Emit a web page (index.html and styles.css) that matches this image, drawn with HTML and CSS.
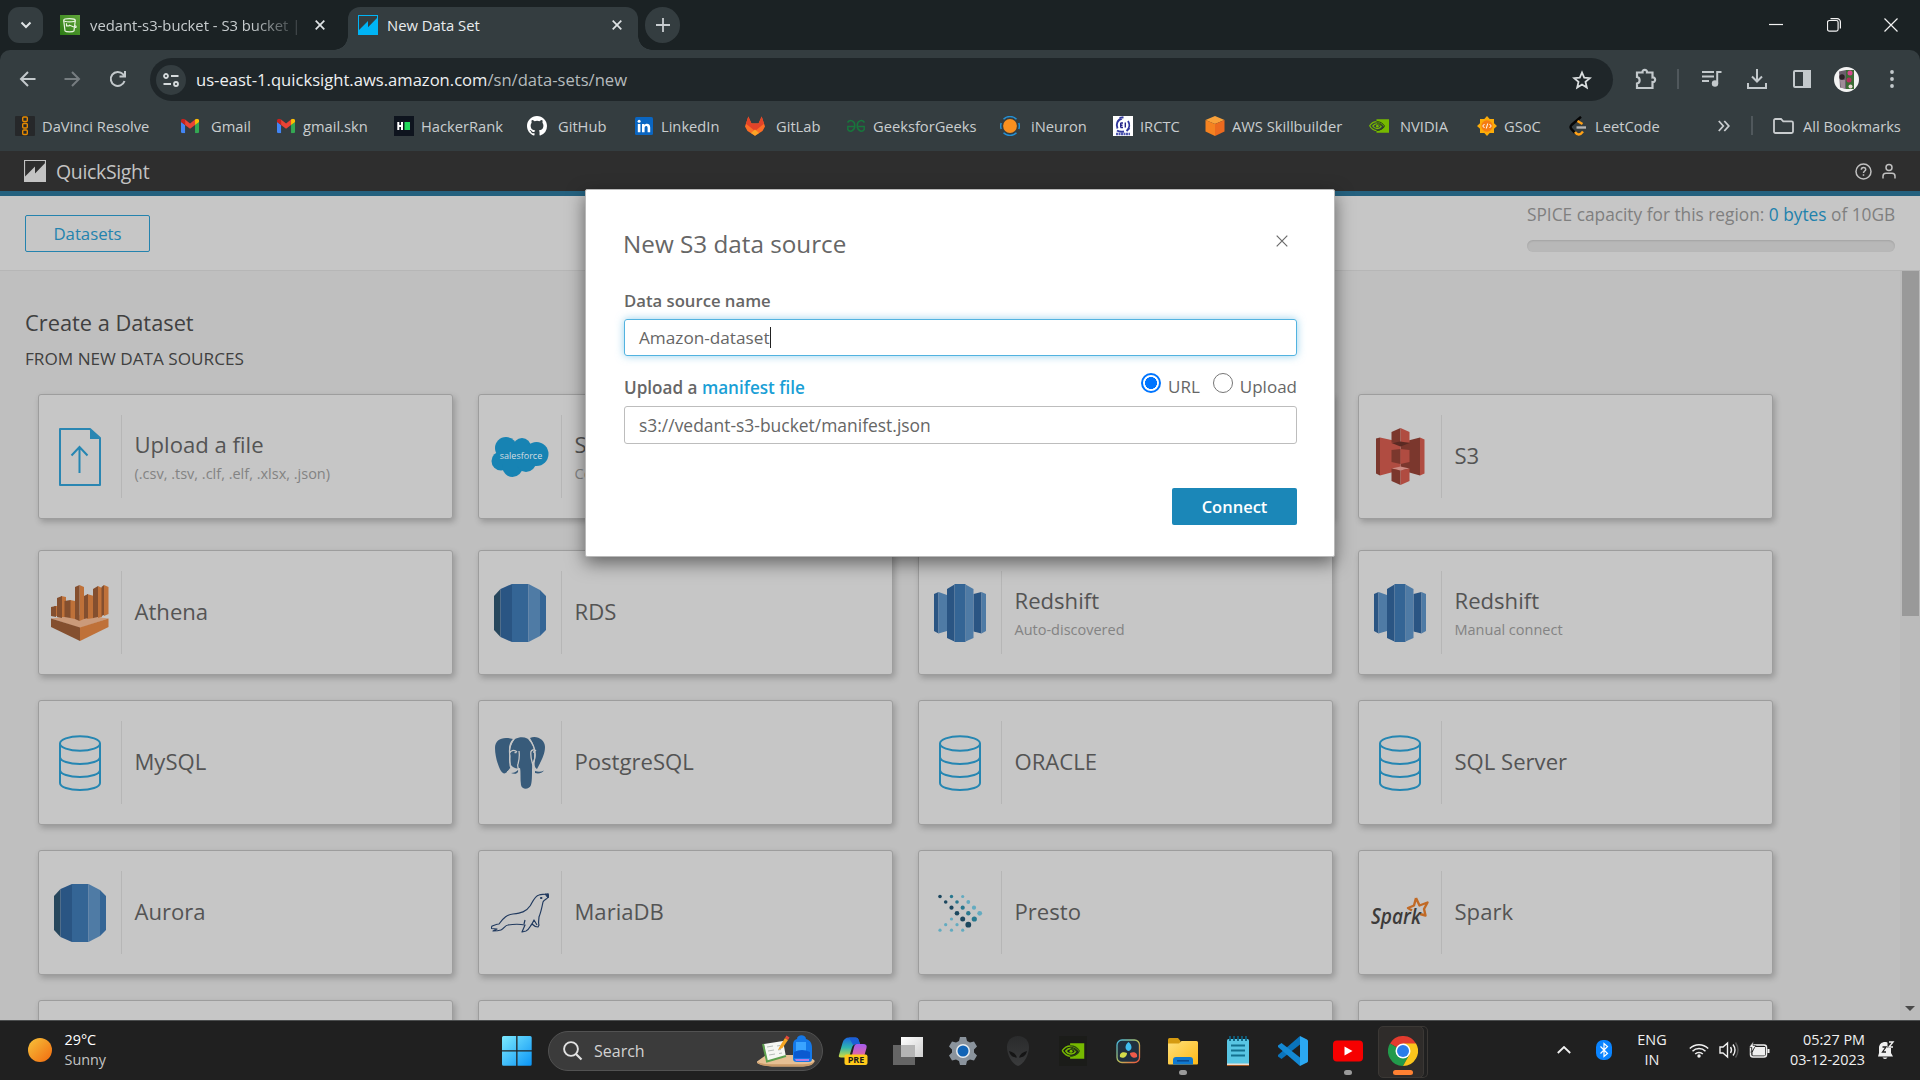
FILE: index.html
```html
<!DOCTYPE html>
<html lang="en">
<head>
<meta charset="utf-8">
<title>New Data Set</title>
<link rel="stylesheet" href="styles.css">
</head>
<body>
<svg class="defs" width="0" height="0">
  <defs>
    <symbol id="quicksight" viewBox="0 0 20 20"><path fill="currentColor" fill-rule="evenodd" d="M0 0h20v20H0zM1 1v14l9-9v6.300l9-9.300V1z"/></symbol>
    <symbol id="gmail" viewBox="0 0 20 16"><path fill="#4285f4" d="M0 3.500 4.500 7v9H1.500A1.500 1.500 0 0 1 0 14.500z"/><path fill="#34a853" d="M20 3.500 15.500 7v9h3a1.500 1.500 0 0 0 1.500-1.500z"/><path fill="#ea4335" d="M4.500 1 10 5.200 15.500 1v6L10 11.200 4.500 7z"/><path fill="#c5221f" d="M0 2.200C0 .3 2-.7 3.600.4l.9.6v6L0 3.600z"/><path fill="#fbbc04" d="M20 2.200c0-1.900-2-2.900-3.600-1.800l-.9.600v6L20 3.600z"/></symbol>
    <symbol id="nvidia" viewBox="0 0 24 16"><path fill="#76b900" d="M9 0h15v16H9v-2.200c4.300.2 7.500-2 9.500-4.300-2.500-3.800-5.500-5.900-9.500-6z"/><path fill="none" stroke="#76b900" stroke-width="1.500" d="M9.500 2.700C5.500 2.700 2.500 5 .8 7.700 2.600 11 5.500 13.300 9.500 13.600M10 5.200C7.500 5.300 5.700 6.500 4.500 8c1.300 2 3 3.100 5.500 3.200 2-.1 3.700-1.200 4.700-2.700C13.500 6.500 12 5.300 10 5.200"/><path fill="none" stroke="#2c4a10" stroke-width="1.200" d="M9 2.700c4.500-.2 7.500 2 9.700 5.300-2.200 3.200-5.200 5.300-9.700 5.500M9.500 5.300c2.800 0 4.800 1.200 6 3"/><circle cx="10" cy="8.200" r="1.600" fill="#76b900"/></symbol>
    <symbol id="database" viewBox="0 0 42 56"><g fill="none" stroke="#2586b2" stroke-width="2"><ellipse cx="21" cy="8.500" rx="20" ry="7.300"/><path d="M1 8.500v39.500c0 4 9 7 20 7s20-3 20-7V8.500M1 22c0 4 9 7 20 7s20-3 20-7M1 35c0 4 9 7 20 7s20-3 20-7"/></g></symbol>
    <symbol id="rds" viewBox="0 0 52 58"><path fill="#26465c" d="M0 12 6.500 5v48L0 46z"/><path fill="#2a5583" d="M6.500 5 18 0v58L6.500 53z"/><path fill="#346595" d="M18 0h16.500v58H18zM46 6l6 6v34l-6 6z"/><path fill="#4f7ba5" d="M34.500 0 46 6v46l-11.500 6z"/></symbol>
    <symbol id="redshift" viewBox="0 0 52 58"><path fill="#2a5583" d="M0 10l4.500-2v41.500L0 47zM13 5l7.500-4.500v57L13 54zM39.500 10l8-2v41.500l-8-2z"/><path fill="#4f7ba5" d="M4.500 8l8.500 3v36l-8.500 2.500zM31.500.5l8 4.500v49l-8 3.500zM47.500 8l4.500 2v37l-4.500 2.500z"/><path fill="#346595" d="M20.500 0h11v58h-11z"/></symbol>
    <linearGradient id="sunfill" x1="0" y1="0" x2="1" y2="1"><stop offset="0" stop-color="#f6c33b"/><stop offset="1" stop-color="#f26a0f"/></linearGradient>
    <linearGradient id="winfill" x1="0" y1="0" x2="1" y2="1"><stop offset="0" stop-color="#7deaff"/><stop offset="1" stop-color="#0a94f5"/></linearGradient>
    <linearGradient id="copA" x1="0" y1="0" x2="0" y2="1"><stop offset="0" stop-color="#1c66e0"/><stop offset=".5" stop-color="#2eb5b0"/><stop offset="1" stop-color="#d6dc3a"/></linearGradient>
    <linearGradient id="copB" x1="0" y1="0" x2="0" y2="1"><stop offset="0" stop-color="#a45cf0"/><stop offset="1" stop-color="#f5668b"/></linearGradient>
    <linearGradient id="folderfill" x1="0" y1="0" x2="1" y2="1"><stop offset="0" stop-color="#ffe07a"/><stop offset="1" stop-color="#fdb917"/></linearGradient>
    <linearGradient id="resolve" x1="0" y1="0" x2="1" y2="1"><stop offset="0" stop-color="#3fb7e8"/><stop offset=".5" stop-color="#b9c05a"/><stop offset="1" stop-color="#f0503c"/></linearGradient>
    <linearGradient id="white" x1="0" y1="0" x2="1" y2="1"><stop offset="0" stop-color="#fff"/><stop offset="1" stop-color="#cfcfcf"/></linearGradient>
    <linearGradient id="bucket" x1="0" y1="1" x2="1" y2="0"><stop offset="0" stop-color="#2b7a14"/><stop offset="1" stop-color="#62a73b"/></linearGradient>
    <linearGradient id="alien" x1="0" y1="0" x2="0" y2="1"><stop offset="0" stop-color="#2a2b2c"/><stop offset="1" stop-color="#3a3b3c"/></linearGradient>
  </defs>
</svg>

<div class="tabstrip">
  <div class="tab-search"><svg width="12" height="8" viewBox="0 0 12 8"><path d="M1.500 1.500 6 6l4.500-4.500" fill="none" stroke="#dfe3e5" stroke-width="2"/></svg></div>
  <div class="tab">
    <svg class="favicon" viewBox="0 0 20 20"><path fill="url(#bucket)" d="M0 0h20v20H0z"/><g fill="none" stroke="#e9f5e3" stroke-width="1.200"><ellipse cx="9.500" cy="5.300" rx="5.800" ry="1.600"/><path d="m3.700 5.500 1.300 10.300c1 1.300 8 1.300 9 0L15.300 5.500M6.500 8.300v2.500h3M9 10l6 2.500q2 0 .5-2"/></g></svg>
    <span class="tab-title fade">vedant-s3-bucket - S3 bucket |</span>
    <svg class="x" viewBox="0 0 10 10"><path d="m.7.7 8.600 8.600M9.300.7.7 9.300"/></svg>
  </div>
  <div class="tab active">
    <svg class="favicon qs" viewBox="0 0 20 20"><use href="#quicksight"/></svg>
    <span class="tab-title">New Data Set</span>
    <svg class="x" viewBox="0 0 10 10"><path d="m.7.7 8.600 8.600M9.300.7.7 9.300"/></svg>
  </div>
  <div class="new-tab"><svg width="14" height="14" viewBox="0 0 14 14"><path d="M7 0v14M0 7h14" stroke="#c8cdd0" stroke-width="1.800"/></svg></div>
  <div class="window-buttons">
    <span><svg width="14" height="14" viewBox="0 0 14 14"><path d="M0 6.500h14"/></svg></span>
    <span><svg width="14" height="14" viewBox="0 0 14 14"><path d="M3.500.6h6.500a3.300 3.300 0 0 1 3.400 3.400v6.500M2.500 2.500h6.800a1.800 1.800 0 0 1 1.800 1.800v7a1.800 1.800 0 0 1-1.800 1.800H2.300a1.800 1.800 0 0 1-1.800-1.800v-7a1.800 1.800 0 0 1 2-1.800z"/></svg></span>
    <span><svg width="14" height="14" viewBox="0 0 14 14"><path d="m.5.5 13 13M13.500.5l-13 13"/></svg></span>
  </div>
</div>

<div class="toolbar-wrap"><div class="toolbar">
  <span class="tool"><svg width="17" height="16" viewBox="0 0 17 16"><path d="M9 1 2 8l7 7M2 8h14.500"/></svg></span>
  <span class="tool dim"><svg width="17" height="16" viewBox="0 0 17 16"><path d="m8 1 7 7-7 7m7-7H.5"/></svg></span>
  <span class="tool"><svg width="18" height="18" viewBox="0 0 18 18"><path d="M15.500 11A7 7 0 1 1 14 4.200L16 6M16 1v5.500h-5.500"/></svg></span>
  <div class="omnibox">
    <span class="site-info"><svg width="16" height="14" viewBox="0 0 16 14"><path d="M8 3h7.500M.5 11H8"/><circle cx="3" cy="3" r="2"/><circle cx="13" cy="11" r="2"/></svg></span>
    <span class="url"><b>us-east-1.quicksight.aws.amazon.com</b>/sn/data-sets/new</span>
    <svg class="star" width="20" height="20" viewBox="0 0 20 20"><path d="m10 2.500 2.200 5.200 5.600.5-4.300 3.700 1.300 5.600L10 14.500l-4.800 3 1.300-5.600-4.300-3.700 5.600-.5z" fill="none" stroke="#dadedf" stroke-width="1.800"/></svg>
  </div>
  <span class="tool ext"><svg width="22" height="22" viewBox="0 0 22 22"><path d="M2 4.500h5.500C7 1 12.500 1 12 4.500h5.500v5c3.500-.5 3.500 5 0 4.500v6H2v-4.500c3.500-.5 3.500-6 0-6.500z" stroke-width="2.200"/></svg></span>
  <i class="rule"></i>
  <span class="tool music"><svg width="20" height="20" viewBox="0 0 20 20"><path d="M0 3h12M0 7.500h12M0 12h7M15.200 14.500V3h4.300"/><circle cx="13" cy="14.500" r="3.200" fill="#c3c9cc" stroke="none"/></svg></span>
  <span class="tool"><svg width="20" height="20" viewBox="0 0 20 20"><path d="M10 0v12.500m-5-5 5 5 5-5M1 14v5h18v-5"/></svg></span>
  <span class="tool"><svg width="18" height="18" viewBox="0 0 18 18"><rect x="1" y="1" width="16" height="16" rx="1"/><path d="M11 1h6v16h-6z" fill="#c3c9cc"/></svg></span>
  <span class="tool"><svg width="25" height="25" viewBox="0 0 25 25"><circle cx="12.500" cy="12.500" r="12.500" fill="#f3f3f3" stroke="none"/><path d="M5 4.500 12 3v19l-6-1.500z" fill="#6b5f6c" stroke="none"/><path d="M12 3h8v19h-8z" fill="#3c6b35" stroke="none"/><circle cx="16" cy="6" r="2.500" fill="#d6478c" stroke="none"/><circle cx="15" cy="13" r="2.500" fill="#b2305e" stroke="none"/><circle cx="16.500" cy="19.500" r="2" fill="#e9d7d3" stroke="none"/><circle cx="8" cy="10" r="2.700" fill="#2b2126" stroke="none"/><path d="M6 13h5v8H7z" fill="#a08b98" stroke="none"/></svg></span>
  <span class="tool"><svg width="4" height="20" viewBox="0 0 4 20"><g fill="#c3c9cc" stroke="none"><circle cx="2" cy="3" r="1.900"/><circle cx="2" cy="10" r="1.900"/><circle cx="2" cy="17" r="1.900"/></g></svg></span>
</div></div>

<div class="bookmarks">
  <div class="bm"><svg viewBox="0 0 20 20"><rect width="20" height="20" rx="1" fill="#26282a"/><g fill="none" stroke="#e58a00" stroke-width="1.400"><rect x="7.700" y="1" width="4.600" height="4.500" rx="1"/><rect x="7.700" y="7.500" width="4.600" height="4.500" rx="1"/><rect x="7.700" y="14" width="4.600" height="4.500" rx="1"/></g></svg>DaVinci Resolve</div>
  <div class="bm wide"><svg viewBox="0 0 20 20"><use href="#gmail" x=".800" y="2.700" width="18.500" height="14.500"/></svg>Gmail</div>
  <div class="bm"><svg viewBox="0 0 20 20"><use href="#gmail" x=".800" y="2.700" width="18.500" height="14.500"/></svg>gmail.skn</div>
  <div class="bm"><svg viewBox="0 0 20 20"><path fill="#0e141e" d="M0 0h20v20H0z"/><path fill="none" stroke="#fff" stroke-width="2" d="M4.300 6v8M8 6v8M4 10h4"/><path fill="#21d95b" d="M10.500 6H16v8h-5.500z"/></svg>HackerRank</div>
  <div class="bm wide near"><svg viewBox="0 0 16 16"><path fill="#fff" d="M8 0C3.580 0 0 3.580 0 8c0 3.540 2.290 6.530 5.470 7.590.4.070.55-.17.55-.38v-1.490c-2.010.37-2.530-.49-2.690-.94-.09-.23-.48-.94-.82-1.130-.28-.15-.68-.52-.01-.53.63-.01 1.080.58 1.230.82.720 1.210 1.870.87 2.330.66.070-.52.280-.87.510-1.070-1.780-.2-3.640-.89-3.640-3.950 0-.87.310-1.590.82-2.150-.08-.2-.36-1.020.08-2.120 0 0 .67-.21 2.200.82a7.500 7.500 0 0 1 4 0c1.530-1.040 2.200-.82 2.200-.82.440 1.100.16 1.920.08 2.120.51.560.82 1.270.82 2.150 0 3.070-1.870 3.750-3.650 3.950.29.250.54.730.54 1.480v2.200c0 .21.150.46.550.38A8 8 0 0 0 16 8c0-4.420-3.580-8-8-8z"/></svg>GitHub</div>
  <div class="bm"><svg viewBox="0 0 20 20"><rect x="1" y="1" width="18" height="18" rx="1.500" fill="#0a66c2"/><g fill="#fff"><path d="M3.800 8h2.600v8.300H3.800zM8 8h2.500v1.200c1.400-2.200 5.700-1.900 5.700 2.300v4.800h-2.600v-4.300c0-2.700-3-2.500-3 0v4.300H8z"/><circle cx="5.100" cy="5.300" r="1.500"/></g></svg>LinkedIn</div>
  <div class="bm wide"><svg viewBox="0 0 20 20"><path fill="#fc6d26" d="M0 10.500 3.300.5 6.500 7.500h7L16.700.5l3.300 10-2.500 4.500L10 19.700 2.500 15z"/><path fill="#e24329" d="M3.300.5 6.500 7.500h7L16.700.5 19 7.800 10 15 1 7.800z"/><path fill="#fca326" d="M10 19.700 6 17l4-3.500L14 17z"/></svg>GitLab</div>
  <div class="bm"><svg viewBox="0 0 20 20"><g fill="none" stroke="#18753c" stroke-width="1.500"><path d="M1.500 6.500c2.500-3.500 7.300-2 7.300 3.200s-5 7-7 3.800V10.500h7M18.500 6.500c-2.500-3.500-7.300-2-7.300 3.200s5 7 7 3.800V10.500h-7"/></g></svg>GeeksforGeeks</div>
  <div class="bm wide"><svg viewBox="0 0 20 20"><circle cx="10" cy="10" r="6.900" fill="#f8901f"/><path d="M3.500 3.200a9.300 9.300 0 0 1 13 0M3.500 16.800a9.300 9.300 0 0 0 13 0M1.200 7a9 9 0 0 0 0 6M18.800 7a9 9 0 0 1 0 6" fill="none" stroke="#2590d3" stroke-width="1.500"/></svg>iNeuron</div>
  <div class="bm"><svg viewBox="0 0 20 20"><path fill="#fff" d="M0 0h20v20H0z"/><path d="M4.500 12.500c-2-4 0-9 4.500-10M6.500 2l4-.7M15 5c2 3 1.500 7-1 9.500M16.500 12l-3 3M4 14.500c2 1.500 4 1.500 7 1" fill="none" stroke="#30379c" stroke-width="1.900"/><path d="M7.500 7h2.500M7.500 9.200h2m-2 2.300h2.500M7.700 7v4.500M12.300 6.500v5" fill="none" stroke="#25258a" stroke-width="1.400"/><path d="M3 18h14" stroke="#5058b0" stroke-width="2.600" stroke-dasharray="2 .5"/></svg>IRCTC</div>
  <div class="bm"><svg viewBox="0 0 20 20"><path fill="#f9a13a" d="m10 0 9.500 4L10 8 .5 4z"/><path fill="#f58220" d="M.5 4 10 8v12L.5 15.500z"/><path fill="#ec6a1f" d="M19.500 4 10 8v12l9.500-4.500z"/></svg>AWS Skillbuilder</div>
  <div class="bm wide"><svg viewBox="0 0 20 20"><use href="#nvidia" y="3" width="20" height="14"/></svg>NVIDIA</div>
  <div class="bm"><svg viewBox="0 0 20 20"><path fill="#fbab09" d="m10 0 2.700 3h4.300v4.300L20 10l-3 2.700V17h-4.300L10 20l-2.700-3H3v-4.300L0 10l3-2.700V3h4.300z"/><circle cx="10" cy="10" r="5.700" fill="#f57c13"/><path d="M7.500 8 5.700 10l1.800 2M12.500 8l1.800 2-1.800 2M10.700 7.500l-1.400 5" fill="none" stroke="#fff" stroke-width="1"/></svg>GSoC</div>
  <div class="bm"><svg viewBox="0 0 20 20"><g fill="none" stroke-width="2.400"><path stroke="#060606" d="M13 .8 3.500 9c-1.500 1.500-1 3 0 4.200l3.500 3.600"/><path stroke="#ffa116" d="m9.500 5 5 3M7 16c2.500 3.500 5 3.500 8-.5"/><path stroke="#b3b3b3" d="M8.500 11.500H18"/></g></svg>LeetCode</div>
  <div class="bm-end">
    <svg width="12" height="12" viewBox="0 0 12 12"><path d="m.8 1 4.500 5-4.500 5M6.300 1l4.500 5-4.500 5"/></svg>
    <i class="rule"></i>
    <svg class="fold" width="21" height="16" viewBox="0 0 21 16"><path d="M1 13.500v-11Q1 1 2.500 1H8l2.200 2.300h8.300Q20 3.300 20 4.800v8.700q0 1.500-1.500 1.500h-16Q1 15 1 13.500z"/></svg>
    <span>All Bookmarks</span>
  </div>
</div>

<header class="app-header">
  <svg width="22" height="22" viewBox="0 0 20 20"><use href="#quicksight"/></svg>
  <span class="brand">QuickSight</span>
  <span class="header-icons">
    <svg width="17" height="17" viewBox="0 0 17 17"><circle cx="8.500" cy="8.500" r="7.500"/><path d="M6.300 6.700c0-3 4.400-3 4.400-.3 0 1.700-2.200 1.600-2.200 3.600m0 1.200v1.600"/></svg>
    <svg width="14" height="17" viewBox="0 0 14 17"><circle cx="7" cy="4.500" r="3"/><path d="M1 15.500v-2.200q0-3 3-3h6q3 0 3 3v2.200"/></svg>
  </span>
</header>
<div class="subheader">
  <button class="datasets">Datasets</button>
  <div class="spice"><div>SPICE capacity for this region: <span class="lnk">0 bytes</span> of 10GB</div><div class="meter"></div></div>
</div>

<main class="content">
  <div class="scrollarea">
    <h1>Create a Dataset</h1>
    <h2>FROM NEW DATA SOURCES</h2>
    <div class="cards">
      <div class="card"><div class="ico"><svg width="42" height="58" viewBox="0 0 42 58"><path d="M1 1h30l10 9v47H1z" fill="none" stroke="#2a86b2" stroke-width="2" stroke-linejoin="round"/><path d="M31 1v10h10z" fill="#2a86b2"/><path d="M20.500 45V19.500m-8 8 8-8.500 8 8.500" fill="none" stroke="#2586b2" stroke-width="2"/></svg></div><div class="txt"><b>Upload a file</b><small>(.csv, .tsv, .clf, .elf, .xlsx, .json)</small></div></div>
      <div class="card"><div class="ico"><svg width="58" height="42" viewBox="0 0 58 42"><g fill="#1783b3"><circle cx="15" cy="12" r="11"/><circle cx="31" cy="11" r="9"/><circle cx="45.500" cy="18" r="12"/><circle cx="10" cy="25" r="9.500"/><circle cx="21.500" cy="31" r="10"/><circle cx="35" cy="26" r="10"/><path d="M12 10h34v20H12z"/></g><text x="30" y="22.500" text-anchor="middle" class="sf">salesforce</text></svg></div><div class="txt"><b>Salesforce</b><small>Connect to Salesforce</small></div></div>
      <div class="card"><div class="ico"></div></div>
      <div class="card"><div class="ico"><svg width="49" height="57" viewBox="0 0 49 57"><path fill="#7b372d" d="M0 10.500 4 9.500v38l-4-2zM44 9.500v38L24.500 42V14.500z"/><path fill="#b04c41" d="M4 9.500 24.500 14v28L4 47.500zM44 9.500l4.500 2v34l-4.500 2z"/><path fill="#7b372d" d="M15.500 4 24.500 0v15l-9-.5zM15.500 22l9-1v15l-9-2z"/><path fill="#b04c41" d="m24.500 0 9 4v10.500l-9 .5zM24.500 21l9 1v12l-9 2z"/><path fill="#5b2a23" d="m15.500 15 9-1.500 9 1.500-9 3.500z"/><path fill="#cb8a82" d="m15.500 40.500 9-2 9 2-9 2z"/><path fill="#7b372d" d="m15.500 40.500 9 2V57l-9-4z"/><path fill="#b04c41" d="m33.500 40.500-9 2V57l9-4z"/></svg></div><div class="txt"><b>S3</b></div></div>

      <div class="card"><div class="ico"><svg width="58" height="56" viewBox="0 0 58 56"><path fill="#cb9a7a" d="m0 33.500 29-3.500 28.500 3.500L29 43z"/><path fill="#844f2f" d="m0 33.500 29 9V56L0 42z"/><path fill="#bf7139" d="m57.500 33.500-28.500 9V56l28.500-14z"/><path fill="#bf7139" d="M3 21h4v10H3zM10 11l5 1v20h-5zM19 15l5 1v18l-5-1zM28.500 0l4.500 2v32l-4.500 2zM36 9l7 2v22l-7 1zM47 1l4 2v29l-4 1zM53 0l4.500 2v27L53 31z"/><path fill="#844f2f" d="M0 22l5-1v11l-5-1zM6 13l5-2v22l-5-1zM13.500 16l6-1v18l-6-1zM24 2l4.500-2v36L24 34zM33 11l4-2v24l-4 1zM42 4l5-3v31l-5 1zM50.500 2 53 0v30l-2.500 1z"/></svg></div><div class="txt"><b>Athena</b></div></div>
      <div class="card"><div class="ico"><svg width="52" height="58"><use href="#rds"/></svg></div><div class="txt"><b>RDS</b></div></div>
      <div class="card"><div class="ico"><svg width="52" height="58"><use href="#redshift"/></svg></div><div class="txt"><b>Redshift</b><small>Auto-discovered</small></div></div>
      <div class="card"><div class="ico"><svg width="52" height="58"><use href="#redshift"/></svg></div><div class="txt"><b>Redshift</b><small>Manual connect</small></div></div>

      <div class="card"><div class="ico"><svg width="42" height="56"><use href="#database"/></svg></div><div class="txt"><b>MySQL</b></div></div>
      <div class="card"><div class="ico"><svg width="50" height="52" viewBox="0 0 50 52"><g fill="#385b7a"><path d="M18 2C8-1 0 2 0 11c0 8 3 18 6 23 2 3 4 3 6 1l4-4-2-8V13c0-5 1-8 4-11z"/><path d="M20 2c6-3 13-2 16 3 4 6 3 12 3 17 0 3-2 6-2 11 0 7 0 11-1 15-2 5-9 5-10 0-1-6 0-13-1-17-3 1-7 0-9-3-2-8-2-20 4-26z"/><path d="M35 1c7-3 15 2 15 9 0 8-5 16-8 22-2-1-3-4-2-8 1-8 0-15-5-23zM16 36c3 0 5-1 7-3 1 3-3 5-7 3zM40 34c3 1 6 1 9-.5-2 3-6 3.500-9 2.500z"/></g><g fill="none" stroke="#c6c6c6" stroke-width="1.300"><path d="M19 2c-5 6-5 12-4 17 0 5-1 8 1 12M22 15c-3-3-7-1-7 1M24 14c1 6 0 9-1 13-1 2 0 4 1 6M16 31c-2 2-2 4-4 4M34 2c5 6 7 11 6 18-.5 4-3 6-2 10l3 3M36 15c0-2 3-3 5-1M36 14c-1 6 1 10 2 15"/></g><path d="M19.500 15.500h2M38 15h1.500" stroke="#c6c6c6" stroke-width="1.500"/></svg></div><div class="txt"><b>PostgreSQL</b></div></div>
      <div class="card"><div class="ico"><svg width="42" height="56"><use href="#database"/></svg></div><div class="txt"><b>ORACLE</b></div></div>
      <div class="card"><div class="ico"><svg width="42" height="56"><use href="#database"/></svg></div><div class="txt"><b>SQL Server</b></div></div>

      <div class="card"><div class="ico"><svg width="52" height="58"><use href="#rds"/></svg></div><div class="txt"><b>Aurora</b></div></div>
      <div class="card"><div class="ico"><svg width="58" height="40" viewBox="0 0 58 40"><g fill="none" stroke="#213a5f" stroke-width="1.200" stroke-linejoin="round"><path d="M1 33c3-1 5-2 7-2 5-7 8-9 14-10 8-1 13-2 17-8 3-5 5-10 9-11 3-1 5 0 9-1.300L57.500 4C56 6 53 7 52 9c-1 5-2 10-4 15 0 2-1 6 0 8l-1 2c-3 0-4-1-6-3-2 2-3 6-6 7l-4 1 3-7c-5-1-11-1-17 0-3 0-4 4-7 5-3 1-5 1-8 1l4-2-6-.5z"/><path d="m33 31 1-4M41 31l2-4 3 5" /></g><path d="m54 1 4 1-1 3zM49 5l2-.5v1z" fill="#213a5f" stroke="#213a5f"/></svg></div><div class="txt"><b>MariaDB</b></div></div>
      <div class="card"><div class="ico"><svg width="46" height="38" viewBox="0 0 46 38"><g fill="#1c475e"><circle cx="3" cy="2.500" r="1.800"/><circle cx="8.700" cy="8" r="1.800"/><circle cx="14.500" cy="13.700" r="2.100"/><circle cx="20" cy="19.300" r="2.300"/><circle cx="25.700" cy="25" r="2.500"/><circle cx="31.300" cy="30.700" r="2.900"/></g><g fill="#28788f"><circle cx="14.500" cy="2.500" r="1.700"/><circle cx="20" cy="8" r="1.800"/><circle cx="25.700" cy="13.700" r="2.100"/><circle cx="31.300" cy="19.300" r="2.200"/><circle cx="37.300" cy="25" r="2.600"/></g><g fill="#63abc0"><circle cx="25.700" cy="2.500" r="1.600"/><circle cx="31.300" cy="8" r="1.900"/><circle cx="37" cy="13.700" r="2.100"/><circle cx="42.700" cy="19.300" r="2.400"/><circle cx="14.500" cy="25" r="1.600"/><circle cx="8.700" cy="30.700" r="1.600"/><circle cx="20" cy="30.700" r="1.600"/><circle cx="3" cy="36.200" r="1.600"/><circle cx="14.500" cy="36.200" r="1.600"/><circle cx="25.700" cy="36.200" r="1.600"/></g></svg></div><div class="txt"><b>Presto</b></div></div>
      <div class="card"><div class="ico"><svg width="58" height="34" viewBox="0 0 58 34"><path d="m45 2 3.500 7.500 8-3L53 13l1.500 6.500-5.500-1.500M45 2l-2 7.500-6 2.500 4 2.500" fill="none" stroke="#c16a26" stroke-width="2.400" stroke-linejoin="round"/><text x="0" y="28" class="sp" textLength="50" lengthAdjust="spacingAndGlyphs">Spark</text></svg></div><div class="txt"><b>Spark</b></div></div>

      <div class="card"></div><div class="card"></div><div class="card"></div><div class="card"></div>
    </div>
  </div>
  <div class="scrollbar"><div class="thumb"></div><svg width="10" height="5" viewBox="0 0 10 5"><path d="M0 0h10L5 5z" fill="#4a4a4a"/></svg></div>
</main>

<footer class="taskbar">
  <div class="weather"><svg width="24" height="24"><circle cx="12" cy="12" r="12" fill="url(#sunfill)"/></svg><div><b>29°C</b><span>Sunny</span></div></div>
  <svg class="start" width="30" height="30" viewBox="0 0 30 30"><path fill="url(#winfill)" d="M1.500 0H14.200v14.200H0V1.500Q0 0 1.500 0zM15.500 0h12.700Q29.700 0 29.700 1.500v12.700H15.500zM0 15.500h14.200v14.200H1.500Q0 29.700 0 28.200zM15.500 15.500h14.200v12.700q0 1.500-1.500 1.500H15.500z"/></svg>
  <div class="search">
    <svg width="20" height="20" viewBox="0 0 20 20"><circle cx="8" cy="8" r="6.900" fill="none" stroke="#e2e2e2" stroke-width="1.900"/><path d="m13 13 5.500 5.500" stroke="#e2e2e2" stroke-width="2.200"/></svg>
    <span>Search</span>
    <svg class="art" width="58" height="32" viewBox="0 0 58 32"><path d="M0 26.500 9 20h40l8 5q1.500 1.500-1 3-3 3-10 3.500H15Q6 31 2 29-1 27.500 0 26.500z" fill="#e6bf93"/><path d="M0 26.500q3 2.500 12 2.700h34q9 0 11.500-3.200-.5 5-11 5.600H15Q1 31 0 26.500z" fill="#c99a68"/><path d="m7 9 19-3 3 16-20 4z" fill="#f6f7f4"/><path d="m6 9 4 17.500 19-5.500" fill="none" stroke="#5da04e" stroke-width="2"/><path d="m10 12 6-1m-5 5 6-1m-5 5 6-1m2-8 3-.5m-2 4.500 3-.5m-2 4 3-.5" stroke="#b5bcb8"/><path d="m21 15 2-4 5-8 3 2-5.500 8z" fill="#f7a521"/><path d="m28 3 1.500-2.500 3 2L31 5z" fill="#e2493a"/><path d="M40 4c0-5 9-5 9 0 4 1 6 4 6 9v11q0 3-3 3H40q-4 0-4-3V13c0-5 0-8 4-9z" fill="#1478e8"/><path d="M39 7h10v9H39z" fill="#3aa4ff"/><path d="M37 17q8-4 16 0v6H37z" fill="#0b5ad0"/><path d="M38 24h14v2H39z" fill="#b07be8"/></svg>
  </div>
  <div class="apps">
    <span><svg viewBox="0 0 30 30"><path d="M1 19 4.500 7Q6 1.500 11 1.500h6.500q2.500 0 3 2L22 8h-3.500q-3.500 0-4.500 3.500L12 18q-1 3.500-4.500 3.500H3q-3 0-2-2.500z" fill="url(#copA)"/><path d="M18.500 8H25q4.500 0 3.500 4l-2 7q-1 3.500-4.500 3.500H10q3.300-.5 4.200-4L16 11q.7-3 2.500-3z" fill="url(#copB)"/><path d="M11 1.500h6.500q2.500 0 3 2L22 8h-3.500q-2 0-3.200 1.300z" fill="#1c5fd6"/><rect x="6.500" y="18.500" width="23" height="10.500" rx="2" fill="#ffc91a"/><text x="18" y="27" text-anchor="middle" class="pre">PRE</text></svg></span>
    <span><svg viewBox="0 0 30 30"><path d="M8 1h22v20H8z" fill="url(#white)"/><path d="M0 9h22v20H0z" fill="#777" fill-opacity=".8"/><path d="M8 9h14v12H8z" fill="#b5b5b5"/></svg></span>
    <span><svg viewBox="0 0 30 30"><path fill="#8a939c" d="M12 1h6l1 4 3 1.500 4-1 3 5-3 3v3l3 3-3 5-4-1-3 1.500-1 4h-6l-1-4-3-1.500-4 1-3-5 3-3v-3l-3-3 3-5 4 1L11 5z"/><circle cx="15" cy="15" r="7" fill="#e9edf0"/><circle cx="15" cy="15" r="5.500" fill="#1264b5"/></svg></span>
    <span><svg viewBox="0 0 30 30"><path d="M15 0c7 0 11 5 11 11 0 8-5 17-11 19C9 28 4 19 4 11 4 5 8 0 15 0z" fill="url(#alien)"/><path d="M6 15c4 1 7 3 8 6.500-4 0-7-2-8-6.500zM24 15c-4 1-7 3-8 6.500 4 0 7-2 8-6.500z" fill="#151515"/></svg></span>
    <span><svg viewBox="0 0 30 30"><path d="M1 0h28v30H1z" fill="#1b1c19"/><use href="#nvidia" x="3.500" y="7" width="23" height="16"/></svg></span>
    <span><svg viewBox="0 0 30 30"><rect x="4" y="4" width="22.500" height="22.500" rx="5" fill="#20303f" stroke="url(#resolve)" stroke-width="1.300"/><path d="M15.500 6c4 3 4 8 0 9-4-1-4-6 0-9z" fill="#40bdf0"/><path d="M14 17c0 4-4 6-7 4-1-4 3-6 7-4z" fill="#d4dc4a"/><path d="M17 17c0 4 4 6 7 4 1-4-3-6-7-4z" fill="#f05a4a"/></svg></span>
    <span><svg viewBox="0 0 30 30"><path d="M0 10V3.500Q0 2 1.500 2H10l2.500 3v5z" fill="#d59a10"/><path d="M0 7.500h11l2.500-2.500H28.500Q30 5 30 6.500v21q0 1-1 1H1q-1 0-1-1z" fill="url(#folderfill)"/><path d="M5 28.500V24q0-3 3-3h14q3 0 3 3v4.500z" fill="#0f79cf"/><path d="M9 24.800h12" stroke="#0a4a90" stroke-width="1.600"/></svg><i></i></span>
    <span><svg viewBox="0 0 30 30"><rect x="4" y="3" width="22" height="27" rx="1.500" fill="#58c5e3"/><path d="M4 27.500h22V30H4z" fill="#e9ded3"/><path d="M4 29h22v1H4z" fill="#a65a25"/><path d="M7 0v5m4-5v5m4-5v5m4-5v5m4-5v5" stroke="#0d5f7e" stroke-width="1.800"/><path d="M8 9.500h14M8 14.500h14M8 19.500h14" stroke="#13708f" stroke-width="2"/></svg></span>
    <span><svg viewBox="0 0 30 30"><path d="M22 0v8.500L3.500 23 0 20.500v-1.500z" fill="#0a73bb"/><path d="M22 30v-8.500L3.500 7 0 9.500V11z" fill="#1489d4"/><path d="m22 0 7 3.500q1 .5 1 1.500v20q0 1-1 1.500L22 30z" fill="#2ba8f2"/></svg></span>
    <span><svg viewBox="0 0 30 30"><rect y="4.500" width="30" height="21" rx="4" fill="#f60000"/><path d="m11.500 10.500 8 4.500-8 4.500z" fill="#fff"/></svg><i></i></span>
    <span class="current"><svg viewBox="0 0 30 30"><path d="M15 15 2 7.500A15 15 0 0 1 28 7.500z" fill="#e33b2e"/><path d="M15 15 2 7.500A15 15 0 0 0 15 30l6.500-11.500z" fill="#229a4b"/><path d="M15 7.500h13A15 15 0 0 1 15 30l6.500-11.500z" fill="#fbc51c"/><circle cx="15" cy="15" r="7.500" fill="#fff"/><circle cx="15" cy="15" r="6" fill="#2b7de9"/></svg><i></i></span>
  </div>
  <div class="tray">
    <svg class="t-up" width="14" height="8" viewBox="0 0 14 8"><path d="m.8 7 6.200-6 6.200 6" fill="none" stroke="#f0f0f0" stroke-width="1.800"/></svg>
    <svg class="t-bt" width="16" height="20" viewBox="0 0 16 20"><rect width="16" height="20" rx="7" fill="#0a84ff"/><path d="m4.500 6.500 7 7L8 16.500v-13l3.500 3-7 7" fill="none" stroke="#fff" stroke-width="1.200"/></svg>
    <div class="t-lang"><span>ENG</span><span>IN</span></div>
    <svg class="t-wifi" width="20" height="16" viewBox="0 0 20 16"><g fill="none" stroke="#f0f0f0" stroke-width="1.500"><path d="M.8 6.500a13 13 0 0 1 18.400 0M3.500 9.300a9.200 9.200 0 0 1 13 0M6.200 12a5.400 5.400 0 0 1 7.600 0"/></g><circle cx="10" cy="14" r="1.700" fill="#f0f0f0"/></svg>
    <svg class="t-vol" width="20" height="18" viewBox="0 0 20 18"><g fill="none" stroke="#f0f0f0" stroke-width="1.400"><path d="M1 6h3l4.500-4v14L4 12H1zM11.500 6q2 3 0 6M14 3.500q4 5.500 0 11"/><path d="M16.500 1.500q5 7.500 0 15" stroke="#555"/></g></svg>
    <svg class="t-bat" width="21" height="18" viewBox="0 0 21 18"><rect x="1.500" y="4" width="16" height="12" rx="2.500" fill="none" stroke="#f0f0f0" stroke-width="1.500"/><path d="M6 6h10v8.500H3.500v-3z" fill="#f0f0f0"/><path d="M18.500 8h2v4h-2z" fill="#f0f0f0"/><path d="M4.500 0 0 6.500h3l-1 5 5-7H4z" fill="#f0f0f0" stroke="#202020" stroke-width=".6"/></svg>
    <div class="t-clock"><span>05:27 PM</span><span>03-12-2023</span></div>
    <svg class="t-bell" width="18" height="20" viewBox="0 0 18 20"><path d="M1 16.500 2 13V8c0-8 12-8 12 0v5l2 3.500z" fill="#f0f0f0"/><path d="M5.500 17.500h5q-2.500 3-5 0z" fill="#f0f0f0"/><path d="M5.500 7H9l-3.500 5H9" fill="none" stroke="#202020" stroke-width="1.300"/><path d="M10.500 1h6v7h-6z" fill="#202020"/><path d="M12 2h4l-4 5h4" fill="none" stroke="#f0f0f0" stroke-width="1.400"/></svg>
  </div>
</footer>

<section class="modal">
  <div class="modal-head"><span>New S3 data source</span><svg width="12" height="12" viewBox="0 0 12 12"><path d="m.7.7 10.600 10.600M11.300.7.7 11.300" stroke="#6a6a6a" stroke-width="1.200"/></svg></div>
  <div class="label first">Data source name</div>
  <div class="field focus">Amazon-dataset<i class="caret"></i></div>
  <div class="label second"><span>Upload a <a>manifest file</a></span>
    <span class="radios"><i class="radio on"></i><em>URL</em><i class="radio"></i><em>Upload</em></span></div>
  <div class="field plain">s3://vedant-s3-bucket/manifest.json</div>
  <div class="actions"><button class="connect">Connect</button></div>
</section>
</body>
</html>
```
FILE: styles.css
```css
* { box-sizing: border-box; }
body {
  margin: 0;
  width: 1920px;
  height: 1080px;
  overflow: hidden;
  position: relative;
  display: flex;
  flex-direction: column;
  font-family: "Open Sans", "Noto Sans", sans-serif;
  background: #bfbfbf;
}
svg { display: block; flex: none; }
.defs { position: absolute; }
button { font-family: inherit; }

/* browser window */
.tabstrip { height: 50px; flex: none; background: #1b2224; display: flex; }
.tab-search {
  width: 35px; height: 36px; margin: 7px 5px 0 8px; border-radius: 11px;
  background: #343d40; display: flex; align-items: center; justify-content: center;
}
.tab { width: 300px; height: 36px; margin-top: 7px; padding: 0 23px 0 12px; display: flex; align-items: center; font-size: 14.800px; color: #c7ccce; }
.favicon { width: 20px; height: 20px; margin-right: 10px; }
.favicon.qs { color: #00b4f5; margin-right: 9px; }
.tab-title { flex: 1; white-space: nowrap; margin-right: 10px; }
.tab-title.fade { -webkit-mask-image: linear-gradient(90deg, #000 75%, rgba(0, 0, 0, .25) 93%); mask-image: linear-gradient(90deg, #000 75%, rgba(0, 0, 0, .25) 93%); }
.x { width: 10px; height: 10px; fill: none; stroke: #dfe3e5; stroke-width: 1.700; }
.tab.active { position: relative; width: 290px; height: 43px; padding: 0 16px 7px 10px; background: #343d40; border-radius: 12px 12px 0 0; color: #e9ecee; }
.active .tab-title { font-weight: 500; }
.tab.active::before, .tab.active::after { content: ""; position: absolute; bottom: 0; width: 14px; height: 14px; }
.tab.active::before { left: -14px; background: radial-gradient(circle at 0 0, transparent 13.500px, #343d40 14px); }
.tab.active::after { right: -14px; background: radial-gradient(circle at 100% 0, transparent 13.500px, #343d40 14px); }
.new-tab { width: 35px; height: 36px; margin: 7px 0 0 7px; border-radius: 18px; background: #343d40; display: flex; align-items: center; justify-content: center; }
.window-buttons { margin-left: auto; display: flex; height: 49px; }
.window-buttons span { width: 57.500px; display: flex; align-items: center; justify-content: center; }
.window-buttons svg { fill: none; stroke: #f2f2f2; stroke-width: 1.200; }

.toolbar-wrap { flex: none; background: #1b2224; }
.toolbar { height: 58px; background: #343d40; border-radius: 10px 10px 0 0; display: flex; align-items: center; padding: 0 5px; }
.tool { width: 45px; display: flex; justify-content: center; }
.tool svg { fill: none; stroke: #c3c9cc; stroke-width: 2; }
.tool.dim svg { stroke: #767d80; }
.omnibox { width: 1463px; height: 43px; margin: 1px 0 0 10px; border-radius: 22px; background: #1f2629; display: flex; align-items: center; padding: 0 21px 0 6px; }
.site-info { width: 30px; height: 30px; border-radius: 15px; background: #343d40; display: flex; align-items: center; justify-content: center; }
.site-info svg { fill: none; stroke: #d5dadc; stroke-width: 1.800; }
.url { flex: 1; margin-left: 10px; font-size: 16.600px; color: #b5bbbd; }
.url b { font-weight: 400; color: #eef0f1; }
.tool.ext { margin-left: 10px; }
.rule { width: 2px; height: 20px; margin: 0 9px; background: #50585c; }
.music { margin-left: 1px; }

.bookmarks {
  flex: none; height: 43px; background: #343d40; padding: 0 0 8px 15px;
  display: grid; align-items: center;
  grid-template-columns: 165px 96px 118px 133px 107px 111px 101px 154px 113px 92px 164px 108px 91px 150px 1fr;
  font-size: 14.700px; font-weight: 500; color: #c9cdcf; white-space: nowrap;
}
.bm { display: flex; align-items: center; gap: 7px; }
.bm svg { width: 20px; height: 20px; }
.bm.wide { gap: 11px; }
.bm-end { display: flex; align-items: center; fill: none; stroke: #c9cdcf; stroke-width: 1.800; }
.bm-end .rule { margin: 0 20px 0 21px; height: 19px; }
.bm-end .fold { margin-right: 9px; }

/* application */
.app-header { flex: none; height: 45px; background: #2e2e2e; border-bottom: 5px solid #24617f; display: flex; align-items: center; padding: 0 24px; color: #c3c3c3; }
.brand { font-size: 19.500px; letter-spacing: -.350px; margin-left: 10px; }
.header-icons { margin-left: auto; display: flex; gap: 10px; fill: none; stroke: #c0c0c0; stroke-width: 1.500; }
.subheader { flex: none; height: 75px; background: #c6c6c6; border-bottom: 1px solid #b6b6b6; display: flex; justify-content: space-between; padding: 0 25px; }
.datasets { width: 125px; height: 37px; margin-top: 19px; padding: 0; background: none; border: 1px solid #2483ae; border-radius: 2px; color: #2483ae; font-size: 16.800px; }
.spice { width: 368px; padding-top: 7px; font-size: 17.300px; line-height: 24px; color: #7f7f7f; white-space: nowrap; }
.lnk { color: #1f82ad; }
.meter { height: 12px; margin-top: 13px; border-radius: 6px; background: #b8b8b8; box-shadow: inset 0 1px 2px rgba(0, 0, 0, .12); }

.content { flex: 1; min-height: 0; display: flex; }
.scrollarea { flex: 1; overflow: hidden; padding: 36px 0 0 25px; }
h1 { margin: 0; font-weight: 400; font-size: 21.800px; line-height: 32px; color: #404040; }
h2 { margin: 8px 0 0; font-weight: 400; font-size: 17.150px; line-height: 24px; color: #404040; }
.cards { margin: 23px 0 0 13px; display: grid; grid-template-columns: repeat(4, 415px); grid-template-rows: 131px; column-gap: 25px; row-gap: 25px; grid-auto-rows: 125px; }
.card { height: 125px; display: flex; align-items: center; background: #c6c6c6; border: 1px solid #9d9d9d; border-radius: 3px; box-shadow: 2px 3px 6px rgba(0, 0, 0, .22); }
.ico { width: 83px; height: 83px; border-right: 1px solid #b6b6b6; display: flex; align-items: center; justify-content: center; }
.txt { margin: 0 0 2px 12.500px; display: flex; flex-direction: column; white-space: nowrap; }
.txt b { font-weight: 400; font-size: 22.100px; line-height: 35px; color: #545454; }
.txt small { font-size: 14.500px; line-height: 23px; color: #838383; }
.sf { font-size: 9px; fill: #d3dde2; }
.sp { font-size: 22px; font-weight: 600; font-style: italic; fill: #3c3a39; }
.scrollbar { width: 20px; background: #bbb; display: flex; flex-direction: column; align-items: center; justify-content: space-between; padding-bottom: 9px; }
.thumb { width: 17px; height: 345px; background: #999; }

/* dialog */
.modal { position: absolute; left: 585px; top: 189px; width: 750px; height: 368px; padding: 0 37px 0 38px; background: #fff; border: 1px solid #b9b9b9; border-radius: 2px; box-shadow: 0 6px 18px rgba(0, 0, 0, .5); color: #666; }
.modal-head { height: 96px; padding: 37px 9px 0 0; display: flex; justify-content: space-between; font-size: 24.250px; line-height: 34px; }
.modal-head span { margin-left: -1px; }
.modal-head svg { margin-top: 8px; }
.label { display: flex; justify-content: space-between; font-size: 16.700px; font-weight: 600; height: 33px; line-height: 30px; }
.label.second { height: 50px; padding-top: 17px; font-size: 17.100px; }
.label a { color: #1a9fd6; }
.field { height: 37px; border: 1px solid #bdbdbd; border-radius: 3px; padding-left: 14px; display: flex; align-items: center; font-size: 17.200px; }
.field.focus { border-color: #52b3e0; box-shadow: 0 0 9px rgba(82, 179, 224, .6); }
.field.plain { height: 38px; font-size: 17.450px; }
.caret { width: 1px; height: 21px; background: #222; }
.radios { display: flex; font-weight: 400; }
.radios em { font-style: normal; font-size: 17px; margin: -1px 0 0 7px; }
.radio { width: 20px; height: 20px; border: 1.500px solid #767676; border-radius: 50%; }
.radio.on { border: 2px solid #0075ff; background: radial-gradient(circle, #0075ff 5.700px, #fff 6.200px); }
.radios em + .radio { margin-left: 13px; }
.actions { margin-top: 44px; display: flex; justify-content: flex-end; }
.connect { width: 125px; height: 37px; border: 0; padding: 0; border-radius: 2px; background: #1b87b8; color: #fff; font-weight: 600; font-size: 16.500px; }

/* taskbar */
.taskbar { flex: none; height: 60px; background: #202020; border-top: 1px solid #4b4d4e; display: flex; align-items: center; color: #f0f0f0; font-size: 14.400px; }
.weather { width: 474px; padding: 0 0 2px 28px; display: flex; align-items: center; gap: 12.500px; line-height: 20px; }
.weather b { display: block; font-weight: 400; color: #fff; }
.weather span { display: block; color: #c4c4c4; }
.start { margin-left: 28px; }
.search { width: 275px; height: 40px; margin-left: 16px; border: 1px solid #525252; border-radius: 20px; background: #3b3b3b; display: flex; align-items: center; padding: 0 7px 0 14px; }
.search span { margin-left: 11px; font-size: 16px; color: #d2d2d2; }
.search .art { margin-left: auto; }
.apps { display: flex; margin-left: 2px; }
.apps span { position: relative; width: 55px; height: 50px; display: flex; align-items: center; justify-content: center; }
.apps svg { width: 30px; height: 30px; position: relative; }
.apps i { position: absolute; bottom: 1px; left: 23.500px; width: 8px; height: 5px; border-radius: 3px; background: #9a9a9a; }
.apps .current::before { content: ""; position: absolute; left: 3px; top: 0; width: 44px; height: 50px; border: 1px solid #3b3835; border-radius: 5px; background: #2f2c2a; }
.apps .current::after { content: ""; position: absolute; left: 45px; top: 0; width: 7px; height: 50px; border: 1px solid #3b3835; border-left: 0; border-radius: 0 5px 5px 0; }
.apps .current i { width: 20px; left: 17.500px; background: #ff8132; }
.pre { font: 700 9px "Open Sans", sans-serif; fill: #1a1a1a; }
.tray { margin-left: auto; display: flex; align-items: center; padding: 0 25px 1px 0; line-height: 20.500px; }
.tray span { display: block; }
.t-bt { margin-left: 25px; }
.t-lang { width: 30px; margin-left: 25px; text-align: center; }
.t-wifi { margin-left: 22px; }
.t-vol { margin-left: 10px; }
.t-bat { margin-left: 10px; }
.t-clock { width: 78px; margin: 0 2px 1px 17px; text-align: right; line-height: 20px; }
.t-bell { margin-left: 10px; }
```
